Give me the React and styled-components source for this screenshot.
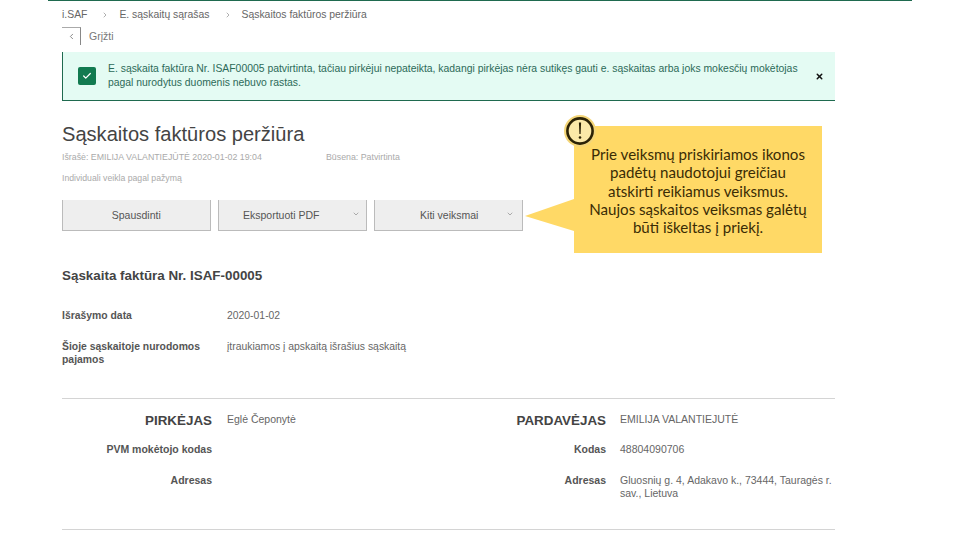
import React from 'react';
import styled, { createGlobalStyle } from 'styled-components';
import { ChevronLeft, ChevronDown, ChevronRight, Check, X } from 'lucide-react';

const GlobalStyle = createGlobalStyle`
  html, body {
    margin: 0;
    padding: 0;
    background: #fff;
  }
  body {
    font-family: "Liberation Sans", Arial, sans-serif;
    color: #444;
  }
`;

const Page = styled.div`
  position: relative;
  width: 960px;
  height: 540px;
  overflow: hidden;
  background: #fff;
`;

const Frame = styled.div`
  margin: 0 48px;
  height: 540px;
  box-sizing: border-box;
  border-top: 1px solid #1f6a4f;
  padding: 0 77px 0 14px;
`;

const Breadcrumbs = styled.nav`
  display: flex;
  align-items: center;
  height: 13px;
  margin-top: 7px;
  font-size: 10.4px;
  color: #666;
`;

const Crumb = styled.span`
  white-space: nowrap;
`;

const CrumbArrow = styled.span`
  display: flex;
  width: ${props => props.$width}px;
  padding-left: ${props => props.$pad}px;
  box-sizing: border-box;
  color: #888;
`;

const BackRow = styled.div`
  display: flex;
  align-items: center;
  gap: 8px;
  margin-top: 6px;
  font-size: 10.5px;
  color: #777;
`;

const BackButton = styled.span`
  display: flex;
  align-items: center;
  justify-content: center;
  width: 19px;
  height: 18px;
  box-sizing: border-box;
  border-top: 1px solid #aaa;
  border-right: 1px solid #888;
  color: #666;
`;

const Alert = styled.div`
  display: flex;
  align-items: center;
  height: 49px;
  margin-top: 7px;
  box-sizing: border-box;
  background: #e4fbf3;
  border-left: 1px solid #1f6a4f;
  border-bottom: 1px solid #1f6a4f;
  padding: 0 11px 0 15px;
`;

const AlertBadge = styled.span`
  display: flex;
  align-items: center;
  justify-content: center;
  flex: none;
  width: 18px;
  height: 18px;
  border-radius: 2px;
  background: #127a50;
  color: #fff;
`;

const AlertText = styled.p`
  flex: 1;
  margin: 0 12px 0 12px;
  font-size: 10.4px;
  line-height: 14px;
  color: #2c6a58;
`;

const AlertClose = styled.span`
  display: flex;
  flex: none;
  color: #111;
`;

const Title = styled.h1`
  margin: 21px 0 0;
  font-size: 20.1px;
  line-height: 24px;
  font-weight: 400;
  color: #444;
`;

const MetaRow = styled.div`
  display: flex;
  margin-top: ${props => props.$top}px;
  font-size: ${props => props.$size}px;
  line-height: 12px;
  color: #aaa;
`;

const MetaCell = styled.span`
  width: ${props => props.$width || 'auto'};
  white-space: nowrap;
`;

const Actions = styled.div`
  display: flex;
  gap: 7.5px;
  margin-top: 16px;
`;

const ActionButton = styled.button`
  position: relative;
  display: flex;
  align-items: center;
  justify-content: center;
  width: 148.5px;
  height: 31px;
  padding: 0 ${props => props.$padRight || 0}px 0 ${props => props.$padLeft || 0}px;
  box-sizing: border-box;
  background: #eee;
  border: 1px solid #bbb;
  border-top: 0;
  border-radius: 0;
  font-family: inherit;
  font-size: 10.5px;
  color: #555;
`;

const ActionChevron = styled.span`
  position: absolute;
  right: ${props => props.$right}px;
  top: 10px;
  display: flex;
  color: #888;
`;

const InvoiceTitle = styled.h2`
  margin: 37px 0 0;
  font-size: 13.4px;
  line-height: 16px;
  font-weight: 700;
  color: #444;
`;

const InfoRow = styled.div`
  display: grid;
  grid-template-columns: 165px 1fr;
  margin-top: ${props => props.$top}px;
  font-size: 10.4px;
  line-height: 13px;
`;

const InfoLabel = styled.span`
  font-weight: 700;
  color: #555;
`;

const InfoValue = styled.span`
  color: #666;
`;

const Divider = styled.hr`
  height: 1px;
  margin: ${props => props.$top}px 0 0;
  border: 0;
  background: #d4d4d4;
`;

const Parties = styled.div`
  display: flex;
`;

const Party = styled.div`
  display: grid;
  grid-template-columns: ${props => props.$label}px 1fr;
  column-gap: ${props => props.$gap}px;
  grid-auto-rows: min-content;
  width: ${props => props.$width}px;
  padding-top: 14px;
`;

const PartyHead = styled.span`
  text-align: right;
  font-size: 13.4px;
  line-height: 16px;
  font-weight: 700;
  color: #444;
  margin-bottom: 14px;
`;

const PartyName = styled.span`
  font-size: 10.5px;
  line-height: 13px;
  color: #666;
`;

const PartyLabel = styled.span`
  text-align: right;
  font-size: 10.5px;
  line-height: 13px;
  font-weight: 700;
  color: #555;
  margin-bottom: 18px;
`;

const PartyValue = styled.span`
  font-size: 10.5px;
  line-height: 13px;
  color: #666;
`;

const Callout = styled.aside`
  position: absolute;
  left: 574px;
  top: 126px;
  width: 248px;
  height: 127px;
  box-sizing: border-box;
  padding-top: 19px;
  background: #ffd966;
  text-align: center;
  font-family: Lato, "Open Sans", sans-serif;
  font-size: 15.1px;
  line-height: 18.3px;
  color: #3a2c05;
`;

const CalloutTail = styled.svg`
  position: absolute;
  left: -49px;
  top: 60px;
`;

const CalloutIcon = styled.svg`
  position: absolute;
  left: -10px;
  top: -11px;
`;

const CalloutLine = styled.div`
  white-space: nowrap;
`;

const breadcrumbs = ['i.SAF', 'E. sąskaitų sąrašas', 'Sąskaitos faktūros peržiūra'];

const seller = [
  ['Kodas', '48804090706'],
  ['Adresas', 'Gluosnių g. 4, Adakavo k., 73444, Tauragės r. sav., Lietuva'],
];

const calloutLines = [
  'Prie veiksmų priskiriamos ikonos',
  'padėtų naudotojui greičiau',
  'atskirti reikiamus veiksmus.',
  'Naujos sąskaitos veiksmas galėtų',
  'būti iškeltas į priekį.',
];

export default function App() {
  return (
    <Page>
      <GlobalStyle />
      <Frame>
        <Breadcrumbs>
          <Crumb>{breadcrumbs[0]}</Crumb>
          <CrumbArrow $width={32} $pad={14}><ChevronRight size={8} /></CrumbArrow>
          <Crumb>{breadcrumbs[1]}</Crumb>
          <CrumbArrow $width={32} $pad={14}><ChevronRight size={8} /></CrumbArrow>
          <Crumb>{breadcrumbs[2]}</Crumb>
        </Breadcrumbs>

        <BackRow>
          <BackButton><ChevronLeft size={9} strokeWidth={2} /></BackButton>
          <span>Grįžti</span>
        </BackRow>

        <Alert>
          <AlertBadge><Check size={10} strokeWidth={3} /></AlertBadge>
          <AlertText>
            E. sąskaita faktūra Nr. ISAF00005 patvirtinta, tačiau pirkėjui nepateikta, kadangi pirkėjas nėra sutikęs gauti e. sąskaitas arba joks mokesčių mokėtojas pagal nurodytus duomenis nebuvo rastas.
          </AlertText>
          <AlertClose><X size={9} strokeWidth={4} /></AlertClose>
        </Alert>

        <Title>Sąskaitos faktūros peržiūra</Title>
        <MetaRow $top={5} $size={8.8}>
          <MetaCell $width="264px">Išrašė: EMILIJA VALANTIEJŪTĖ 2020-01-02 19:04</MetaCell>
          <MetaCell>Būsena: Patvirtinta</MetaCell>
        </MetaRow>
        <MetaRow $top={9} $size={8.7}>
          <MetaCell>Individuali veikla pagal pažymą</MetaCell>
        </MetaRow>

        <Actions>
          <ActionButton>Spausdinti</ActionButton>
          <ActionButton $padRight={22}>
            Eksportuoti PDF
            <ActionChevron $right={5.5}><ChevronDown size={8} /></ActionChevron>
          </ActionButton>
          <ActionButton $padLeft={2}>
            Kiti veiksmai
            <ActionChevron $right={7.5}><ChevronDown size={8} /></ActionChevron>
          </ActionButton>
        </Actions>

        <InvoiceTitle>Sąskaita faktūra Nr. ISAF-00005</InvoiceTitle>

        <InfoRow $top={25}>
          <InfoLabel>Išrašymo data</InfoLabel>
          <InfoValue>2020-01-02</InfoValue>
        </InfoRow>
        <InfoRow $top={18}>
          <InfoLabel>Šioje sąskaitoje nurodomos pajamos</InfoLabel>
          <InfoValue>įtraukiamos į apskaitą išrašius sąskaitą</InfoValue>
        </InfoRow>

        <Divider $top={32} />

        <Parties>
          <Party $label={150} $gap={15} $width={386}>
            <PartyHead>PIRKĖJAS</PartyHead>
            <PartyName>Eglė Čeponytė</PartyName>
            <PartyLabel>PVM mokėtojo kodas</PartyLabel>
            <PartyValue />
            <PartyLabel>Adresas</PartyLabel>
            <PartyValue />
          </Party>
          <Party $label={158} $gap={14} $width={387}>
            <PartyHead>PARDAVĖJAS</PartyHead>
            <PartyName>EMILIJA VALANTIEJUTĖ</PartyName>
            {seller.map(([label, value]) => (
              <React.Fragment key={label}>
                <PartyLabel>{label}</PartyLabel>
                <PartyValue>{value}</PartyValue>
              </React.Fragment>
            ))}
          </Party>
        </Parties>

        <Divider $top={24} />
      </Frame>

      <Callout>
        <CalloutTail width="49" height="60" viewBox="0 0 49 60">
          <polygon points="0,30 49,13 49,45" fill="#ffd966" />
        </CalloutTail>
        <CalloutIcon width="32" height="32" viewBox="0 0 32 32">
          <circle cx="16" cy="16" r="16" fill="#f4d679" />
          <circle cx="16" cy="16" r="12.6" fill="#fbe9a8" stroke="#2b2205" strokeWidth="2.6" />
          <polygon points="14.9,7.5 17.1,7.5 16.6,19 15.4,19" fill="#2b2205" />
          <circle cx="16" cy="22.5" r="1.3" fill="#2b2205" />
        </CalloutIcon>
        {calloutLines.map(line => <CalloutLine key={line}>{line}</CalloutLine>)}
      </Callout>
    </Page>
  );
}
